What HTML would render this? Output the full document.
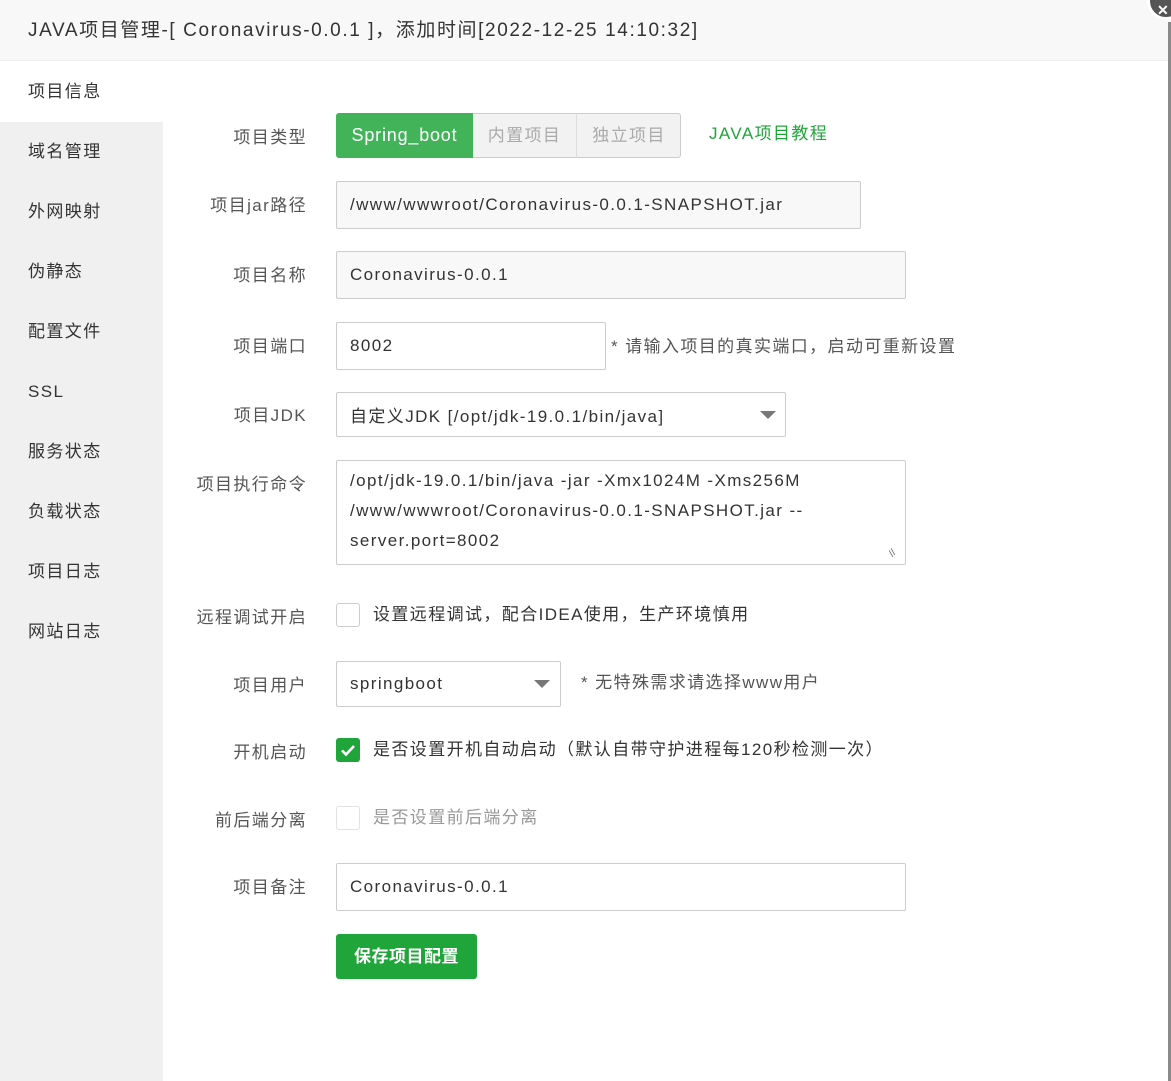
<!DOCTYPE html>
<html><head><meta charset="utf-8"><style>
*{margin:0;padding:0;box-sizing:border-box}
body{width:1171px;height:1081px;position:relative;overflow:hidden;background:#fff;font-family:"Liberation Sans","Noto Sans CJK SC",sans-serif;font-size:17px;color:#333;letter-spacing:1.4px}
.a{position:absolute;white-space:nowrap}
.t{position:absolute;white-space:nowrap;line-height:22px;height:22px}
.lab{position:absolute;white-space:nowrap;line-height:22px;right:864px;color:#555}
.in{position:absolute;border:1px solid #ccc;border-radius:2px;padding-left:13px;color:#333;display:flex;align-items:center}
.side{position:absolute;left:28px;color:#333;line-height:22px}
.tri{position:absolute;width:0;height:0;border-left:8px solid transparent;border-right:8px solid transparent;border-top:8px solid #777}
.cb{position:absolute;width:24px;height:24px;border:1px solid #ccc;border-radius:3px;background:#fff}
</style></head><body>
<div class="a" style="left:0;top:0;width:1171px;height:61px;background:#f8f8f8;border-bottom:1px solid #eee"></div>
<div class="t" style="left:28px;top:20px;font-size:19px;color:#333;letter-spacing:1.6px">JAVA项目管理-[ Coronavirus-0.0.1 ]，添加时间[2022-12-25 14:10:32]</div>
<div class="a" style="left:1147px;top:-18px;width:38px;height:38px;border-radius:50%;background:#555;border:3px solid #fff"></div>
<div class="a" style="left:1157px;top:2px;color:#fff;font-size:14px;font-weight:bold">✕</div>
<div class="a" style="left:1168px;top:22px;width:3px;height:1059px;background:#8a8a8a"></div>

<div class="a" style="left:0;top:62px;width:163px;height:1019px;background:#f0f0f0"></div>
<div class="a" style="left:0;top:62px;width:163px;height:60px;background:#fff"></div>
<div class="side" style="top:81px">项目信息</div>
<div class="side" style="top:141px">域名管理</div>
<div class="side" style="top:201px">外网映射</div>
<div class="side" style="top:261px">伪静态</div>
<div class="side" style="top:321px">配置文件</div>
<div class="side" style="top:381px">SSL</div>
<div class="side" style="top:441px">服务状态</div>
<div class="side" style="top:501px">负载状态</div>
<div class="side" style="top:561px">项目日志</div>
<div class="side" style="top:621px">网站日志</div>

<div class="lab" style="top:127px">项目类型</div>
<div class="a" style="left:336px;top:113px;width:345px;height:45px;border:1px solid #ccc;border-radius:3px;background:#f2f2f2"></div>
<div class="a" style="left:336px;top:113px;width:137px;height:45px;background:#43b35a;border-radius:3px 0 0 3px;color:#fff;line-height:45px;text-align:center;font-size:18px;letter-spacing:0.8px">Spring_boot</div>
<div class="a" style="left:473px;top:113px;width:104px;height:45px;border-right:1px solid #ddd;color:#aaa;line-height:45px;text-align:center">内置项目</div>
<div class="a" style="left:577px;top:113px;width:104px;height:45px;color:#aaa;line-height:45px;text-align:center">独立项目</div>
<div class="t" style="left:709px;top:123px;color:#20a53a">JAVA项目教程</div>

<div class="lab" style="top:195px">项目jar路径</div>
<div class="in" style="left:336px;top:181px;width:525px;height:48px;background:#f8f8f8">/www/wwwroot/Coronavirus-0.0.1-SNAPSHOT.jar</div>

<div class="lab" style="top:265px">项目名称</div>
<div class="in" style="left:336px;top:251px;width:570px;height:48px;background:#f8f8f8">Coronavirus-0.0.1</div>

<div class="lab" style="top:336px">项目端口</div>
<div class="in" style="left:336px;top:322px;width:270px;height:48px">8002</div>
<div class="t" style="left:611px;top:336px;color:#555">* 请输入项目的真实端口，启动可重新设置</div>

<div class="lab" style="top:405px">项目JDK</div>
<div class="in" style="left:336px;top:392px;width:450px;height:45px">自定义JDK [/opt/jdk-19.0.1/bin/java]</div>
<div class="tri" style="left:760px;top:411px"></div>

<div class="lab" style="top:474px">项目执行命令</div>
<div class="in" style="left:336px;top:460px;width:570px;height:105px;display:block;padding-top:5px;line-height:30px;white-space:normal">/opt/jdk-19.0.1/bin/java -jar -Xmx1024M -Xms256M<br>/www/wwwroot/Coronavirus-0.0.1-SNAPSHOT.jar --<br>server.port=8002</div>
<div class="a" style="left:890px;top:548px;font-size:10px;color:#666;transform:rotate(-45deg);letter-spacing:0">//</div>

<div class="lab" style="top:607px">远程调试开启</div>
<div class="cb" style="left:336px;top:603px"></div>
<div class="t" style="left:373px;top:604px">设置远程调试，配合IDEA使用，生产环境慎用</div>

<div class="lab" style="top:675px">项目用户</div>
<div class="in" style="left:336px;top:661px;width:225px;height:46px">springboot</div>
<div class="tri" style="left:534px;top:680px"></div>
<div class="t" style="left:581px;top:672px;color:#555">* 无特殊需求请选择www用户</div>

<div class="lab" style="top:742px">开机启动</div>
<div class="a" style="left:336px;top:738px;width:24px;height:24px;border-radius:3px;background:#20a53a"></div>
<svg class="a" style="left:336px;top:738px" width="24" height="24"><path d="M6 12.5l4 4 8-8.5" stroke="#fff" stroke-width="2.6" fill="none"/></svg>
<div class="t" style="left:373px;top:739px">是否设置开机自动启动（默认自带守护进程每120秒检测一次）</div>

<div class="lab" style="top:810px">前后端分离</div>
<div class="cb" style="left:336px;top:806px;border-color:#e2e2e2"></div>
<div class="t" style="left:373px;top:807px;color:#999">是否设置前后端分离</div>

<div class="lab" style="top:877px">项目备注</div>
<div class="in" style="left:336px;top:863px;width:570px;height:48px">Coronavirus-0.0.1</div>

<div class="a" style="left:336px;top:934px;width:141px;height:45px;background:#20a53a;border-radius:3px;color:#fff;line-height:45px;text-align:center;font-weight:bold;letter-spacing:0.5px">保存项目配置</div>
</body></html>
